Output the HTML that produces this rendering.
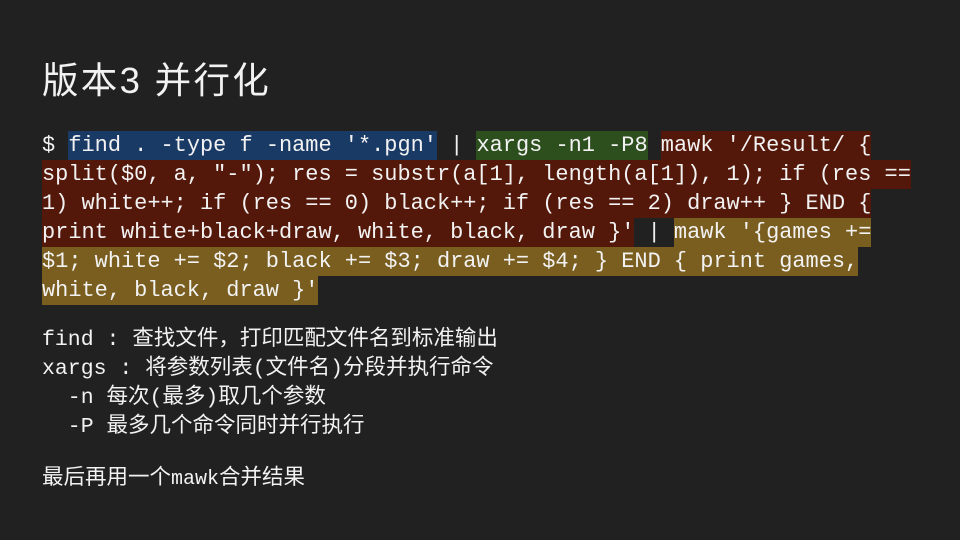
<!DOCTYPE html>
<html><head><meta charset="utf-8"><style>
html,body{margin:0;padding:0;background:#212121;width:960px;height:540px;overflow:hidden;color:#f2f2f2}
.t{position:absolute;left:42px;top:59px;font:36.5px/44px "Liberation Sans","Noto Sans CJK SC",sans-serif;letter-spacing:2.3px}
.code{position:absolute;left:42px;top:131px;font:21.95px/29px "Liberation Mono",monospace;white-space:pre}
.code div{height:29px}
.code span{display:inline-block;height:29px;vertical-align:top}
.b{background:#1a3a66}.g{background:#2d4f1e}.r{background:#54180a}.y{background:#7a5e1f}
.s{position:absolute;left:42px;top:326px;font:21.5px/29px "Liberation Mono","Noto Sans CJK SC",monospace;white-space:pre}
.l{position:absolute;left:42px;top:465px;font:21.5px/29px "Liberation Mono","Noto Sans CJK SC",monospace;white-space:pre}
</style></head><body>
<div class="t">版本3 并行化</div>
<div class="code"><div>$ <span class="b">find . -type f -name '*.pgn'</span> | <span class="g">xargs -n1 -P8</span> <span class="r">mawk '/Result/ {</span></div><div><span class="r">split($0, a, "-"); res = substr(a[1], length(a[1]), 1); if (res ==</span></div><div><span class="r">1) white++; if (res == 0) black++; if (res == 2) draw++ } END {</span></div><div><span class="r">print white+black+draw, white, black, draw }'</span> | <span class="y">mawk '{games +=</span></div><div><span class="y">$1; white += $2; black += $3; draw += $4; } END { print games,</span></div><div><span class="y">white, black, draw }'</span></div></div>
<div class="s">find : 查找文件，打印匹配文件名到标准输出
xargs : 将参数列表(文件名)分段并执行命令
  -n 每次(最多)取几个参数
  -P 最多几个命令同时并行执行</div>
<div class="l">最后再用一个<span style="font-size:20px">mawk</span>合并结果</div>
</body></html>
